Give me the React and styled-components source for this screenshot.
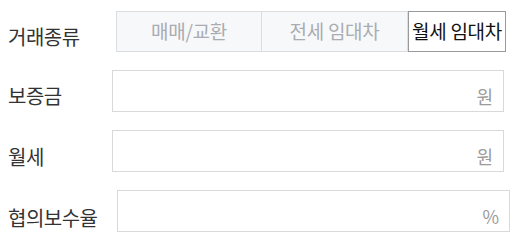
import styled, { createGlobalStyle } from "styled-components";

const GlobalStyle = createGlobalStyle`
  body {
    margin: 0;
    background: #ffffff;
    font-family: "Noto Sans CJK KR", "Noto Sans", sans-serif;
  }
`;

const Form = styled.div`
  display: flex;
  flex-direction: column;
  gap: 18px;
  padding: 10px 0 0 8px;
`;

const Row = styled.div`
  display: flex;
  align-items: center;
  height: 42px;
`;

const Label = styled.div`
  width: ${(p) => p.$width}px;
  flex-shrink: 0;
  font-size: 20px;
  line-height: 1;
  color: #333333;
  letter-spacing: -0.5px;
  padding-top: ${(p) => p.$drop || 0}px;
`;

const Tabs = styled.div`
  display: flex;
  height: 41px;
`;

const Tab = styled.button`
  width: ${(p) => p.$width}px;
  height: 100%;
  padding: 0 0 2px;
  margin: 0;
  display: flex;
  align-items: center;
  justify-content: center;
  font-family: inherit;
  font-size: 19px;
  line-height: 1;
  white-space: nowrap;
  letter-spacing: -0.3px;
  color: ${(p) => (p.$active ? "#111111" : "#a9acb1")};
  background: ${(p) => (p.$active ? "#ffffff" : "#f7f8fa")};
  border: 1px solid ${(p) => (p.$active ? "#9a9a9a" : "#dcdde0")};
  border-left-width: ${(p) => (p.$first || p.$active ? 1 : 0)}px;
  cursor: pointer;
`;

const Field = styled.div`
  width: ${(p) => p.$width}px;
  height: 42px;
  box-sizing: border-box;
  border: 1px solid #d9d9d9;
  background: #ffffff;
  display: flex;
  align-items: flex-end;
  justify-content: flex-end;
  padding: 0 10px 6px 0;
`;

const Unit = styled.span`
  font-size: 18px;
  line-height: 1;
  color: #9b9b9b;
`;

export default function App() {
  return (
    <>
      <GlobalStyle />
      <Form>
        <Row>
          <Label $width={108} $drop={11}>거래종류</Label>
          <Tabs>
            <Tab $width={146} $first>매매/교환</Tab>
            <Tab $width={146}>전세 임대차</Tab>
            <Tab $width={98} $active>월세 임대차</Tab>
          </Tabs>
        </Row>
        <Row>
          <Label $width={104} $drop={10}>보증금</Label>
          <Field $width={392}>
            <Unit>원</Unit>
          </Field>
        </Row>
        <Row>
          <Label $width={104} $drop={12}>월세</Label>
          <Field $width={392}>
            <Unit>원</Unit>
          </Field>
        </Row>
        <Row>
          <Label $width={109} $drop={13}>협의보수율</Label>
          <Field $width={393}>
            <Unit>%</Unit>
          </Field>
        </Row>
      </Form>
    </>
  );
}
